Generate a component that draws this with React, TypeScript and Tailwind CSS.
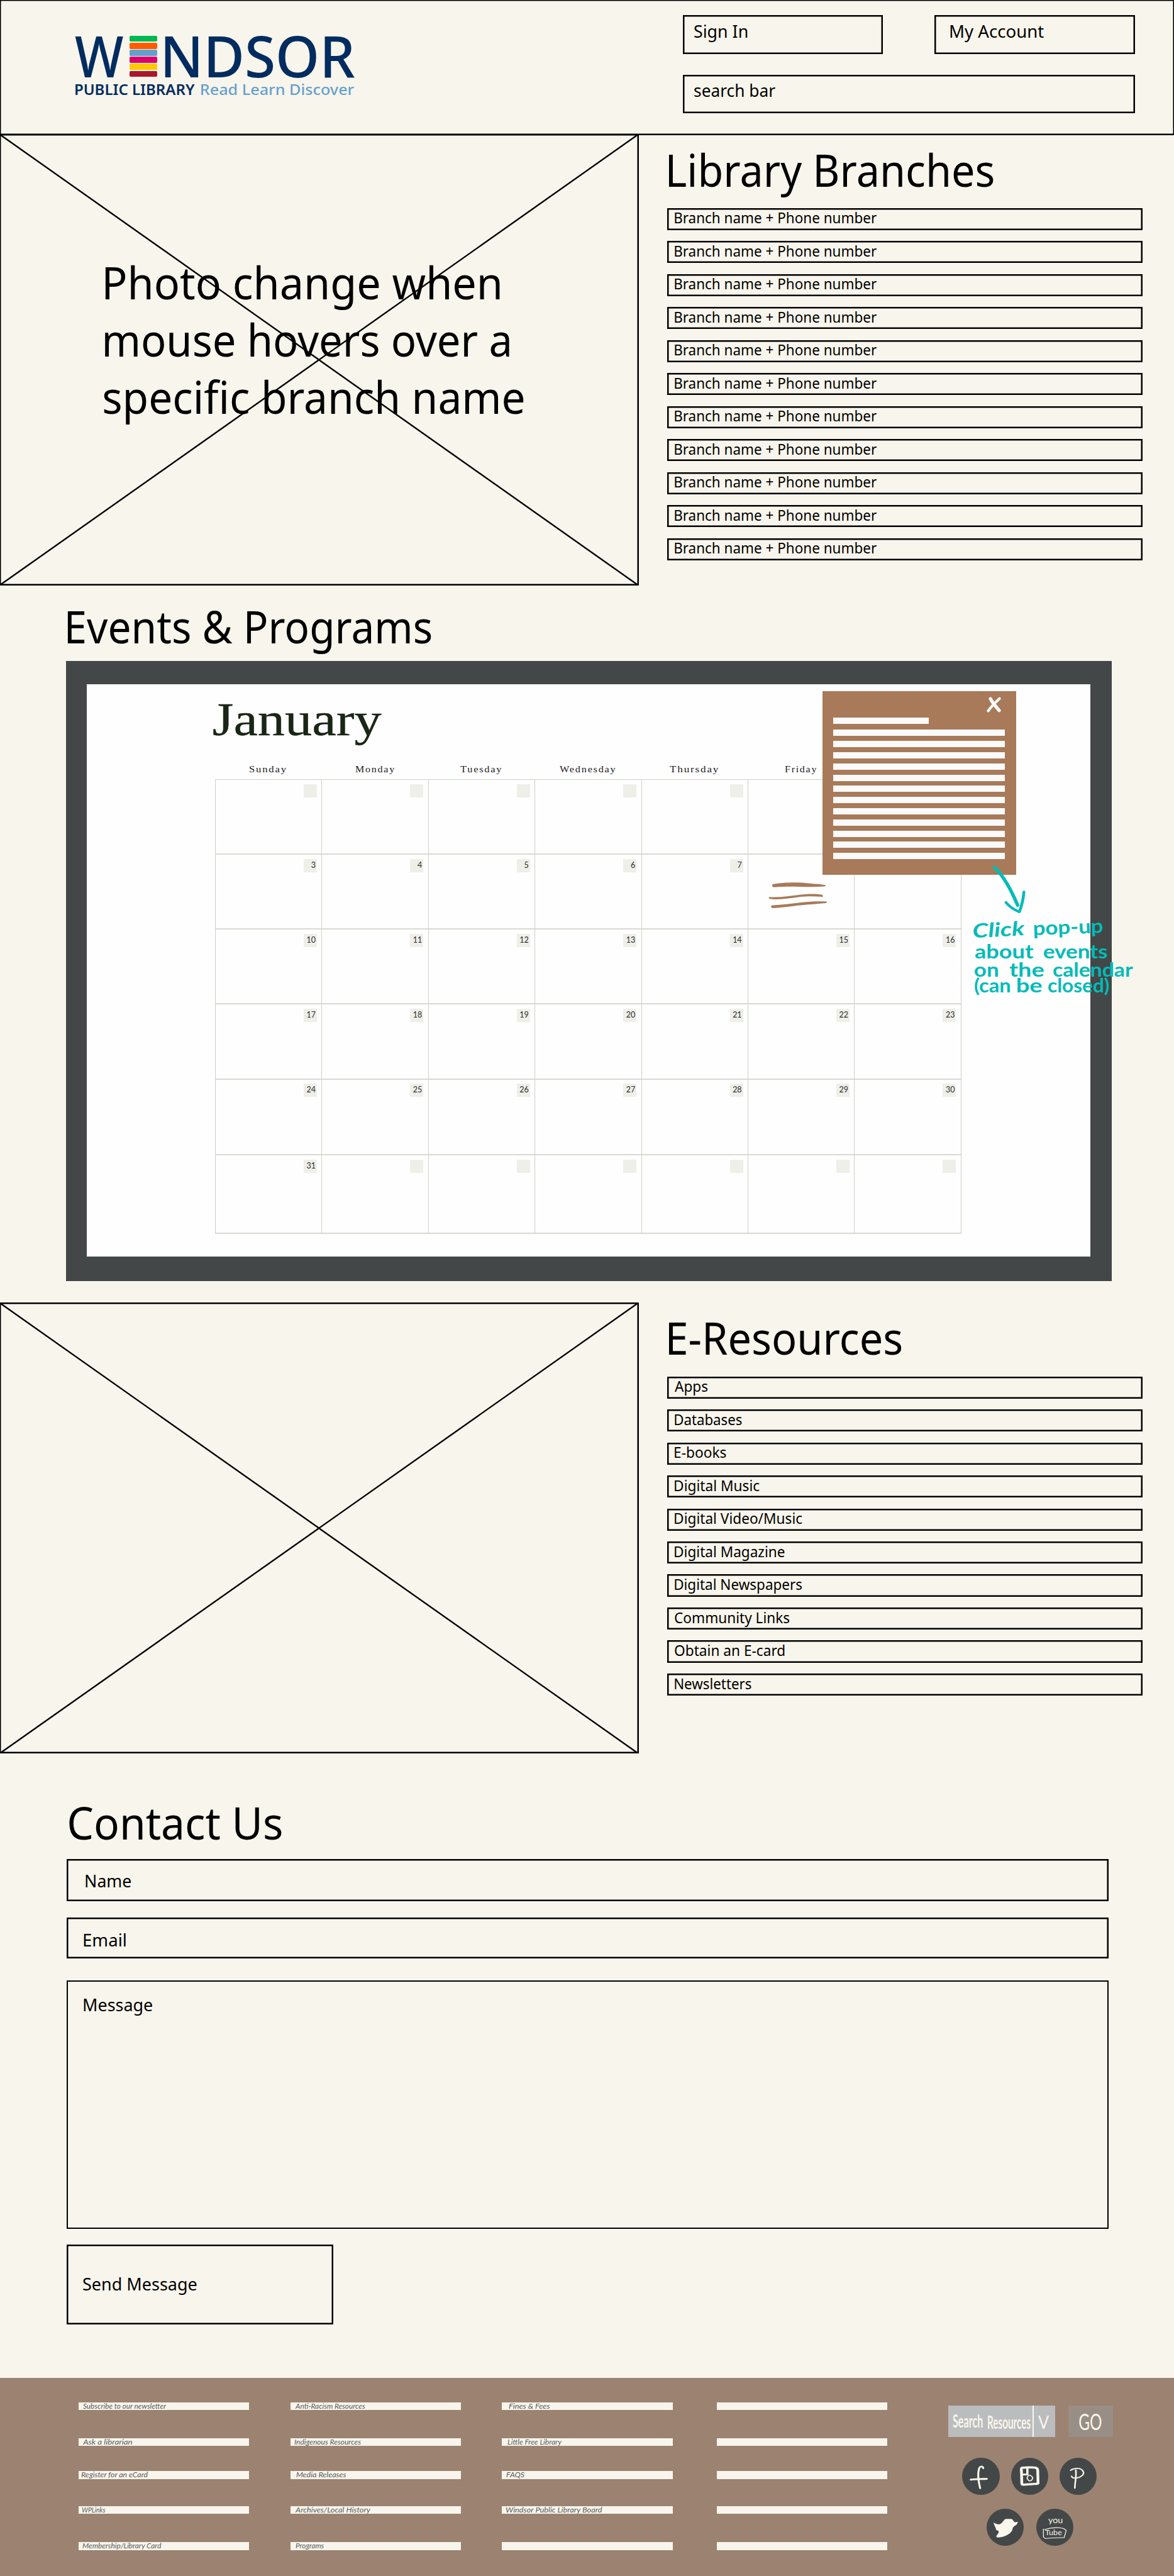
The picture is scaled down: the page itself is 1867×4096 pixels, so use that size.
import { useLayoutEffect, useRef, useState, type ReactNode } from "react";

const SANS = "font-['Noto_Sans',sans-serif]";
const HAND = "font-[Lato,'Noto_Sans',sans-serif]";

/** One line of text stretched so that its ink spans exactly `w` pixels. */
function Fit({ w, className = "", children }: { w: number; className?: string; children: string }) {
  const ref = useRef<HTMLSpanElement>(null);
  const [transform, setTransform] = useState("none");
  useLayoutEffect(() => {
    const el = ref.current;
    const ctx = document.createElement("canvas").getContext("2d");
    if (!el || !ctx) return;
    const cs = getComputedStyle(el);
    ctx.font = `${cs.fontStyle} ${cs.fontWeight} ${cs.fontSize} ${cs.fontFamily}`;
    if (cs.letterSpacing !== "normal") (ctx as any).letterSpacing = cs.letterSpacing;
    const m = ctx.measureText(children);
    const s = w / (m.actualBoundingBoxLeft + m.actualBoundingBoxRight);
    setTransform(`translateX(${m.actualBoundingBoxLeft * s}px) scaleX(${s})`);
  }, [w, children]);
  return (
    <span className={`block shrink-0 whitespace-nowrap ${className}`} style={{ width: w }}>
      <span ref={ref} className="inline-block origin-left align-top" style={{ transform }}>
        {children}
      </span>
    </span>
  );
}

function Heading({ w, className = "", children }: { w: number; className?: string; children: string }) {
  return (
    <h2 className={className}>
      <Fit w={w} className="text-[72px] leading-[72px]">
        {children}
      </Fit>
    </h2>
  );
}

function Box({ className = "", children }: { className?: string; children?: ReactNode }) {
  return <div className={`shadow-[inset_0_0_0_2.5px_#000] ${className}`}>{children}</div>;
}

function PhotoBox({ className = "", children }: { className?: string; children?: ReactNode }) {
  return (
    <Box className={`relative -ml-px w-[1016.5px] shrink-0 ${className}`}>
      <svg className="absolute inset-0 h-full w-full" viewBox="0 0 1016 718" preserveAspectRatio="none">
        <path d="M1 1 1015 717M1015 1 1 717" stroke="#000" strokeWidth="2.4" fill="none" />
      </svg>
      {children}
    </Box>
  );
}

function LinkList({ items, className = "" }: { items: [string, number][]; className?: string }) {
  return (
    <ul className={`flex w-[756.2px] flex-col gap-[17.3px] ${className}`}>
      {items.map(([label, w], i) => (
        <li key={i}>
          <Box className="h-[35.2px] pt-[3.7px] pl-[12.5px]">
            <Fit w={w} className="text-[24px] leading-[24px]">
              {label}
            </Fit>
          </Box>
        </li>
      ))}
    </ul>
  );
}

function Logo() {
  const books = ["bg-[#00b850]", "bg-[#ff5c00]", "bg-[#659fcb]", "bg-[#d8006f]", "bg-[#ffca00]", "bg-[#ab162b]"];
  return (
    <div className="pt-[50.6px] pl-[120px] text-[#002c5f]">
      <div className="flex h-[75px]">
        <Fit w={77.5} className="text-[91.3px] leading-[75px] font-medium">
          W
        </Fit>
        <div className="mt-[7.1px] ml-[9.9px] flex h-[65.6px] w-[44.1px] flex-col gap-[1.4px]">
          {books.map((c) => (
            <div key={c} className={`flex-1 rounded-[2px] ${c}`} />
          ))}
        </div>
        <Fit w={302} className="ml-[11.1px] text-[91.3px] leading-[75px] font-medium">
          NDSOR
        </Fit>
      </div>
      <div className="mt-[7px] ml-[1.3px] flex text-[22.7px] leading-[22.7px]">
        <Fit w={189.7} className="font-semibold">
          PUBLIC LIBRARY
        </Fit>
        <Fit w={243.7} className="ml-[10px] font-medium text-[#66a1cd]">
          Read Learn Discover
        </Fit>
      </div>
    </div>
  );
}

function Header() {
  return (
    <header className="-mx-px -mt-px flex h-[216.4px] shrink-0 justify-between shadow-[inset_0_0_0_2.5px_#000]">
      <Logo />
      <div className="mr-[63.3px] flex w-[719px] flex-col pt-[25.4px] text-[27px] leading-[27px]">
        <div className="flex justify-between">
          <Box className="h-[61.4px] w-[318.4px] pt-[11.2px] pl-[18.2px]">
            <Fit w={84.5}>Sign In</Fit>
          </Box>
          <Box className="h-[61.4px] w-[318.4px] pt-[11.2px] pl-[25.1px]">
            <Fit w={149.5}>My Account</Fit>
          </Box>
        </div>
        <Box className="mt-[33.1px] h-[61.4px] pt-[11.6px] pl-[18.2px]">
          <Fit w={129}>search bar</Fit>
        </Box>
      </div>
    </header>
  );
}

const DAYS: [string, number][] = [
  ["Sunday", 58.6],
  ["Monday", 62.8],
  ["Tuesday", 66],
  ["Wednesday", 89.3],
  ["Thursday", 78],
  ["Friday", 51],
];

function Popup() {
  return (
    <div className="absolute top-[10.8px] left-[1170.3px] h-[291.7px] w-[308.1px] bg-[#a87a59] pt-[41.8px] pl-[16.8px]">
      <svg className="absolute top-[8.5px] left-[261px] h-[25px] w-[24px]" viewBox="0 0 24 25" fill="none" stroke="#fafafa" strokeLinecap="round">
        <path d="M6 3C9 9 15 16 20 21.8" strokeWidth="5.2" />
        <path d="M20.5 2.8C16 7 8 14 2.5 22.5" strokeWidth="4.2" />
      </svg>
      <div className="h-[10.4px] w-[152.3px] bg-[#fafafa]" />
      <div className="mt-[9px] flex flex-col gap-[7.93px]">
        {Array.from({ length: 12 }, (_, i) => (
          <div key={i} className="h-[9.9px] w-[273px] bg-[#fafafa]" />
        ))}
      </div>
    </div>
  );
}

function Note() {
  return (
    <div className={`absolute top-[372.6px] left-[1410px] w-[260px] text-[31px] leading-[25px] font-bold text-[#00bbb7] ${HAND}`}>
      <div className="flex h-[39.5px] gap-[14px]">
        <Fit w={82} className="translate-y-[4px] -rotate-3 italic">
          Click
        </Fit>
        <Fit w={110} className="-rotate-2">
          pop-up
        </Fit>
      </div>
      <div className="ml-[1.5px] flex h-[28.3px] gap-[16px]">
        <Fit w={94}>about</Fit>
        <Fit w={101}>events</Fit>
      </div>
      <div className="ml-[1.5px] flex h-[25.2px]">
        <Fit w={37}>on</Fit>
        <Fit w={55} className="ml-[18px]">
          the
        </Fit>
        <Fit w={127} className="ml-[15px]">
          calendar
        </Fit>
      </div>
      <div className="ml-[1.5px] flex">
        <Fit w={56}>(can</Fit>
        <Fit w={40} className="ml-[11px]">
          be
        </Fit>
        <Fit w={97} className="ml-[10.5px]">
          closed)
        </Fit>
      </div>
    </div>
  );
}

function Calendar() {
  return (
    <div className="mt-[20px] ml-[105.4px] h-[986.4px] w-[1662.8px] shrink-0 bg-[#434747] pt-[37.7px] pr-[34.5px] pb-[39.5px] pl-[32.7px]">
      <div className="relative h-full bg-[#fefefe] pt-[19.4px] pl-[203.8px]">
        <Fit w={268.3} className="-ml-[2.8px] font-['Liberation_Serif',serif] text-[73px] leading-[73px] text-[#1a2615] [-webkit-text-stroke:0.4px_#1a2615]">
          January
        </Fit>
        <div className="mt-[32px] grid w-[1186px] grid-cols-7 font-['Liberation_Serif',serif] text-[15px] leading-[20px] tracking-[1.6px] text-[#222]">
          {DAYS.map(([d, w]) => (
            <div key={d} className="flex justify-center">
              <Fit w={w}>{d}</Fit>
            </div>
          ))}
        </div>
        <div className="mt-[6.2px] grid w-[1187px] grid-cols-7 grid-rows-[119.3px_119.2px_119px_119.1px_120.4px_124.7px] border-t border-l border-[#cfd0c6]">
          {Array.from({ length: 42 }, (_, i) => {
            const n = i - 4;
            return (
              <div key={i} className="flex justify-end border-r border-b-2 border-r-[#cfd0c6] border-b-[#d9dad2] pt-[6.6px] pr-[7.4px]">
                <div className={`h-[21.3px] w-[21px] bg-[#eeefe9] pr-[2px] text-right text-[12.5px] leading-[20px] text-[#2b2b2b] ${HAND}`}>
                  {n >= 3 && n <= 31 && n !== 8 && n !== 9 ? n : ""}
                </div>
              </div>
            );
          })}
        </div>
        <svg className="absolute top-[314.6px] left-[1084.4px] h-[41.5px] w-[94.1px]" viewBox="150 955 207 107" preserveAspectRatio="none" fill="#a87a59">
          <path d="M167 962C195 956 240 954 275 957C305 961 330 962 349 966Q352 970 346 972C290 977 240 969 169 975Q160 972 164 964Z" />
          <path d="M152 1015C185 1018 225 1011 260 1006C290 1002 320 1002 338 1006Q343 1011 340 1014C310 1012 285 1011 250 1016C215 1021 180 1028 155 1023Q149 1019 152 1015Z" />
          <path d="M163 1049C200 1047 240 1040 275 1036C305 1033 335 1032 355 1034Q357 1037 350 1040C310 1045 280 1046 245 1051C215 1056 190 1058 165 1061Q157 1057 160 1051Z" />
        </svg>
        <Popup />
        <svg className="absolute top-[287.4px] left-[1438.9px] h-[77.5px] w-[54.5px]" viewBox="930 885 120 200" preserveAspectRatio="none" fill="none" stroke="#00bbb7" strokeLinecap="round" strokeLinejoin="round">
          <path d="M940 893C968 925 995 975 1021 1049" strokeWidth="12" />
          <path d="M980 1037C992 1054 1008 1067 1027 1076C1035 1052 1041 1025 1043 994" strokeWidth="10" />
        </svg>
        <Note />
      </div>
    </div>
  );
}

const FOOTER_COLUMNS: { left: string; items: ([string, number, number] | null)[] }[] = [
  {
    left: "ml-[124.5px]",
    items: [
      ["Subscribe to our newsletter", 133.5, 7.9],
      ["Ask a librarian", 79.5, 6],
      ["Register for an eCard", 106.5, 4.6],
      ["WPLinks", 38, 5.6],
      ["Membership/Library Card", 125.6, 6],
    ],
  },
  {
    left: "ml-[66.5px]",
    items: [
      ["Anti-Racism Resources", 112, 7],
      ["Indigenous Resources", 106.5, 6],
      ["Media Releases", 80, 9],
      ["Archives/Local History", 120.4, 7],
      ["Programs", 45.6, 8],
    ],
  },
  {
    left: "ml-[65px]",
    items: [
      ["Fines & Fees", 66, 10.7],
      ["Little Free Library", 86.4, 9],
      ["FAQS", 29.4, 7],
      ["Windsor Public Library Board", 154, 6],
      null,
    ],
  },
  { left: "ml-[70.7px]", items: [null, null, null, null, null] },
];

function Circle({ children }: { children: ReactNode }) {
  return <div className="relative h-[59.4px] w-[59.5px] rounded-full bg-[#434747]">{children}</div>;
}

const ICON = "absolute inset-0 h-full w-full";

function Footer() {
  return (
    <footer className="mt-auto flex h-[314.7px] shrink-0 bg-[#9c8270]">
      {FOOTER_COLUMNS.map((col, c) => (
        <ul
          key={c}
          className={`grid w-[271.2px] shrink-0 grid-rows-[57.2px_52.8px_55.2px_57.2px_13px] pt-[38.2px] text-[11.5px] leading-[12px] text-[#565b5d] italic ${HAND} ${col.left}`}
        >
          {col.items.map((item, i) => (
            <li key={i} className="h-[12.7px] bg-[#f8f5ec]" style={{ paddingLeft: item ? item[2] : 0 }}>
              {item && <Fit w={item[1]}>{item[0]}</Fit>}
            </li>
          ))}
        </ul>
      ))}
      <div className={`ml-[96.1px] flex w-[262.4px] flex-col pt-[43.6px] text-[#f9f6ec] ${HAND}`}>
        <div className="flex h-[49.7px] justify-between">
          <div className="flex w-[170.3px] bg-[#bbbcbe]">
            <div className="flex w-[136px] gap-[7.6px] border-r-2 border-[#f9f6ec] pt-[8px] pl-[7.6px] text-[28px] leading-[32px] font-bold">
              <Fit w={48}>Search</Fit>
              <Fit w={68} className="translate-y-[2px]">
                Resources
              </Fit>
            </div>
            <Fit w={17.5} className="ml-[7px] pt-[10px] text-[29px] leading-[32px]">
              V
            </Fit>
          </div>
          <div className="flex w-[71.2px] justify-center bg-[#998e85] pt-[7px] text-[36px] leading-[36px]">
            <Fit w={36}>GO</Fit>
          </div>
        </div>
        <div className="mt-[33.1px] ml-[22.9px] flex gap-[17.6px]">
          <Circle>
            <svg className={ICON} viewBox="277 636 228 294" preserveAspectRatio="none" fill="none" stroke="#f9f6ec" strokeLinecap="round" strokeLinejoin="round">
              <path d="M406 719C402 699 386 699 380 723C370 770 375 815 387 876" strokeWidth="12" />
              <path d="M331 808C365 802 395 804 426 802" strokeWidth="15" />
            </svg>
          </Circle>
          <Circle>
            <svg className={ICON} viewBox="573 636 228 294" preserveAspectRatio="none" fill="none" stroke="#f9f6ec" strokeLinecap="round" strokeLinejoin="round">
              <path d="M638 715C665 711 690 711 712 713Q735 714 735 735L737 835Q736 843 725 841C700 843 670 847 645 848Q637 847 638 835L636 745Q633 720 638 715Z" strokeWidth="17" />
              <path d="M672 718V768H642" strokeWidth="14" />
              <path d="M684 773C693 773 706 787 704 798C700 811 692 819 685 818C676 813 669 800 671 791C674 780 678 774 684 773Z" strokeWidth="7" />
            </svg>
          </Circle>
          <Circle>
            <svg className={ICON} viewBox="868 636 228 294" preserveAspectRatio="none" fill="none" stroke="#f9f6ec" strokeLinecap="round" strokeLinejoin="round">
              <path d="M935 735C960 713 995 716 1009 737C1022 758 1010 777 990 789C970 799 946 802 941 781" strokeWidth="9" />
              <path d="M967 733C972 780 962 825 961 875" strokeWidth="10" />
            </svg>
          </Circle>
        </div>
        <div className="mt-[21.8px] ml-[61.3px] flex gap-[19.2px]">
          <Circle>
            <svg className={ICON} viewBox="424 1038 228 294" preserveAspectRatio="none" fill="#f9f6ec">
              <path d="M466 1144C475 1155 490 1162 502 1161C520 1156 524 1132 539 1119C555 1117 568 1118 578 1120C587 1127 588 1140 596 1144C604 1144 610 1139 614 1144C611 1157 603 1170 595 1173C580 1188 584 1198 578 1213C567 1238 538 1255 516 1261C502 1264 488 1268 483 1258C484 1243 500 1230 498 1217C497 1210 483 1209 482 1201C479 1182 468 1165 466 1144Z" />
            </svg>
          </Circle>
          <Circle>
            <div className="absolute top-[9px] left-[19px] flex flex-col">
              <Fit w={22.4} className="text-[14px] leading-[18px]">
                you
              </Fit>
              <Fit w={27} className="-ml-[5px] pt-[2.5px] text-[11px] leading-[18px]">
                Tube
              </Fit>
            </div>
            <svg className={ICON} viewBox="726 1038 228 294" preserveAspectRatio="none" fill="none" stroke="#f9f6ec" strokeWidth="5" strokeLinecap="round" strokeLinejoin="round">
              <path d="M769 1198L770 1262L781 1273C815 1268 860 1267 896 1266C898 1246 907 1226 908 1208C900 1198 888 1191 876 1189C840 1184 805 1190 776 1203" />
            </svg>
          </Circle>
        </div>
      </div>
    </footer>
  );
}

export default function App() {
  return (
    <div className={`flex h-[4096px] w-[1867px] flex-col overflow-hidden bg-[#f8f5ec] text-black ${SANS}`}>
      <Header />
      <section className="-mt-[2.7px] flex h-[718.3px] shrink-0">
        <PhotoBox>
          <div className="relative pt-[190.5px] pl-[168.3px] text-[72px] leading-[91.1px]">
            <Fit w={627.8}>Photo change when</Fit>
            <Fit w={643}>mouse hovers over a</Fit>
            <Fit w={667.3} className="-ml-[2px]">
              specific branch name
            </Fit>
          </div>
        </PhotoBox>
        <div className="ml-[45.1px] pt-[19.9px]">
          <Heading w={517} className="ml-[2.8px]">
            Library Branches
          </Heading>
          <LinkList className="mt-[26.1px]" items={Array.from({ length: 11 }, () => ["Branch name + Phone number", 321.3] as [string, number])} />
        </div>
      </section>
      <Heading w={579} className="mt-[27.7px] ml-[106.7px] shrink-0">
        Events & Programs
      </Heading>
      <Calendar />
      <section className="mt-[33.5px] flex h-[717.8px] shrink-0">
        <PhotoBox />
        <div className="ml-[45.1px] pt-[19.3px]">
          <Heading w={371} className="ml-[2.8px]">
            E-Resources
          </Heading>
          <LinkList
            className="mt-[26.7px]"
            items={[
              ["Apps", 52.5],
              ["Databases", 107],
              ["E-books", 82],
              ["Digital Music", 134.7],
              ["Digital Video/Music", 202.6],
              ["Digital Magazine", 175],
              ["Digital Newspapers", 202.6],
              ["Community Links", 182.6],
              ["Obtain an E-card", 174.6],
              ["Newsletters", 122],
            ]}
          />
        </div>
      </section>
      <section className="mt-[73.1px] ml-[106px] w-[1657.4px] shrink-0 text-[28px] leading-[28px]">
        <Heading w={338} className="ml-[3.5px]">
          Contact Us
        </Heading>
        <Box className="mt-[22.9px] h-[66.5px] pt-[19.9px] pl-[29.7px]">
          <Fit w={72.6}>Name</Fit>
        </Box>
        <Box className="mt-[25.7px] h-[65.3px] pt-[21.3px] pl-[27.4px]">
          <Fit w={66.7}>Email</Fit>
        </Box>
        <div className="mt-[34.9px] h-[395.2px] pt-[23.8px] pl-[27.4px] shadow-[inset_0_0_0_2px_#000]">
          <Fit w={109.5}>Message</Fit>
        </div>
        <Box className="mt-[25px] h-[127.2px] w-[423.9px] pt-[48.3px] pl-[26px]">
          <Fit w={181}>Send Message</Fit>
        </Box>
      </section>
      <Footer />
    </div>
  );
}
